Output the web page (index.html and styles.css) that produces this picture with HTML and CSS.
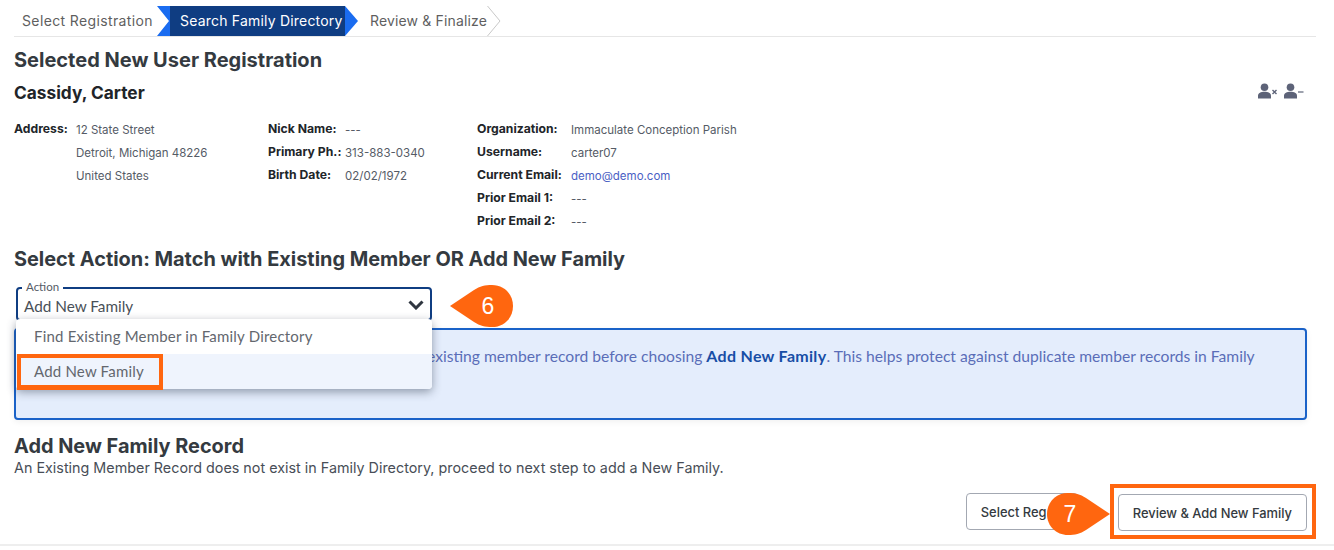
FILE: index.html
```html
<!DOCTYPE html>
<html lang="en">
<head>
<meta charset="utf-8">
<title>Search Family Directory</title>
<link rel="stylesheet" href="styles.css">
</head>
<body>
<main class="page">
  <nav class="stepper">
    <span class="step first">Select Registration</span>
    <svg class="notch" width="13" height="30" viewBox="0 0 13 30"><polygon points="0,0 13,0 13,30 0,30 12,15" fill="#1a6cf0"/></svg>
    <span class="step active">Search Family Directory</span>
    <svg class="tip" width="13" height="30" viewBox="0 0 13 30"><polygon points="0,0 13,15 0,30" fill="#1a6cf0"/></svg>
    <span class="step last">Review &amp; Finalize</span>
    <svg class="tip" width="14" height="30" viewBox="0 0 14 30"><polyline points="0.5,0 13,15 0.5,30" fill="none" stroke="#c8c8c8" stroke-width="1"/></svg>
  </nav>

  <h1 class="title">Selected New User Registration</h1>
  <div class="name-row">
    <h2 class="name">Cassidy, Carter</h2>
    <div class="user-icons">
      <svg width="20" height="16" viewBox="0 0 20 16"><circle cx="6.5" cy="4.2" r="3.8" fill="#5d6378"/><path d="M0 15.500 V12.500 C0 10 3 8.700 6.500 8.700 S13 10 13 12.500 V15.500Z" fill="#5d6378"/><path d="M14.500 7 L18.500 11 M18.500 7 L14.500 11" stroke="#5d6378" stroke-width="1.400"/></svg>
      <svg width="20" height="16" viewBox="0 0 20 16"><circle cx="6.500" cy="4.200" r="3.800" fill="#5d6378"/><path d="M0 15.500 V12.500 C0 10 3 8.700 6.500 8.700 S13 10 13 12.500 V15.500Z" fill="#5d6378"/><path d="M14 9 H19.500" stroke="#5d6378" stroke-width="1.200"/></svg>
    </div>
  </div>

  <section class="details">
    <dl class="col col-a">
      <dt>Address:</dt><dd>12 State Street</dd>
      <dt></dt><dd>Detroit, Michigan 48226</dd>
      <dt></dt><dd>United States</dd>
    </dl>
    <dl class="col col-b">
      <dt>Nick Name:</dt><dd>---</dd>
      <dt>Primary Ph.:</dt><dd>313-883-0340</dd>
      <dt>Birth Date:</dt><dd>02/02/1972</dd>
    </dl>
    <dl class="col col-c">
      <dt>Organization:</dt><dd>Immaculate Conception Parish</dd>
      <dt>Username:</dt><dd>carter07</dd>
      <dt>Current Email:</dt><dd class="link">demo@demo.com</dd>
      <dt>Prior Email 1:</dt><dd>---</dd>
      <dt>Prior Email 2:</dt><dd>---</dd>
    </dl>
  </section>

  <h2 class="section-title">Select Action: Match with Existing Member OR Add New Family</h2>

  <div class="select-wrap">
    <div class="select">
      <span class="select-label">Action</span>
      <span class="select-value">Add New Family</span>
      <svg class="caret" width="16" height="10" viewBox="0 0 16 10"><polyline points="1.500,1.500 8,8 14.500,1.500" fill="none" stroke="#2f3640" stroke-width="3"/></svg>
    </div>
    <ul class="menu">
      <li class="option">Find Existing Member in Family Directory</li>
      <li class="option selected"><span class="mark">Add New Family</span></li>
    </ul>
    <svg class="callout callout-6" width="64" height="42" viewBox="0 0 64 42"><path d="M0 21 L24 5 C30 1 35 0 42 0 C54 0 63 9 63 21 C63 33 54 42 42 42 C35 42 30 41 24 37Z" fill="#ff660f"/><text x="38" y="29" text-anchor="middle">6</text></svg>
  </div>

  <div class="notice">existing member record before choosing <b>Add New Family</b>. This helps protect against duplicate member records in Family</div>

  <h2 class="add-title">Add New Family Record</h2>
  <p class="add-text">An Existing Member Record does not exist in Family Directory, proceed to next step to add a New Family.</p>

  <div class="actions">
    <button class="btn btn-back">Select Reg</button>
    <span class="frame"><button class="btn">Review &amp; Add New Family</button></span>
    <svg class="callout callout-7" width="64" height="42" viewBox="0 0 64 42"><path d="M64 21 L40 5 C34 1 29 0 22 0 C10 0 1 9 1 21 C1 33 10 42 22 42 C29 42 34 41 40 37Z" fill="#ff660f"/><text x="24" y="29" text-anchor="middle">7</text></svg>
  </div>
</main>
</body>
</html>
```
FILE: styles.css
```css
* { box-sizing: border-box; }
html, body { margin: 0; padding: 0; background: #fff; }
body { width: 1334px; height: 550px; overflow: hidden; font-family: "Inter", "Liberation Sans", sans-serif; color: #343a40; }
.page { padding: 6px 16px 0 14px; height: 546px; border-bottom: 2px solid #eeeeee; position: relative; }

.stepper { display: flex; align-items: stretch; height: 31px; border-bottom: 1px solid #e6e6e6; margin-right: 2px; }
.stepper svg { flex: none; display: block; }
.step { display: flex; align-items: center; height: 30px; padding-bottom: 2px; font-size: 14px; letter-spacing: 0.1px; color: #5f5f5f; white-space: nowrap; }
.step.first { width: 143px; padding-left: 8px; letter-spacing: 0.37px; }
.step.active { width: 175px; padding-left: 10px; background: #0f3d82; color: #fff; letter-spacing: 0.2px; }
.step.last { width: 129px; padding-left: 12px; letter-spacing: 0.15px; }

.title { margin: 10px 0 0; font-size: 20px; line-height: 26px; font-weight: 700; color: #343a40; }
.name-row { display: flex; justify-content: space-between; align-items: center; height: 26px; margin-top: 7px; padding-right: 14px; }
.name { margin: 0; font-size: 17.300px; line-height: 24px; font-weight: 700; color: #212529; }
.user-icons { display: flex; gap: 6px; margin-top: -4px; }

.details { display: flex; margin-top: 12px; height: 115px; font-size: 11.500px; }
.col { display: grid; margin: 0; grid-auto-rows: 23px; align-items: center; align-content: start; }
.col dt { font-size: 12.200px; font-weight: 700; color: #212529; padding-bottom: 2px; }
.col dd { margin: 0; color: #555b66; white-space: nowrap; }
.col-a { width: 254px; grid-template-columns: 62px 1fr; }
.col-b { width: 209px; grid-template-columns: 77px 1fr; }
.col-c { grid-template-columns: 94px 1fr; }
.col .link { color: #4a60c4; }

.section-title { margin: 13px 0 0; font-size: 19.900px; line-height: 26px; font-weight: 700; color: #343a40; }

.select-wrap { position: relative; width: 416px; height: 34px; margin: 15px 0 0 2px; }
.select { height: 34px; border: 2px solid #0f3d82; border-radius: 4px; position: relative; font-family: "Lato", sans-serif; }
.select-label { position: absolute; left: 4px; top: -9px; padding: 0 4px; background: #fff; font-size: 11.500px; line-height: 14px; color: #555b66; }
.select-value { position: absolute; left: 6px; top: 8px; font-size: 15.300px; line-height: 18px; color: #495057; }
.caret { position: absolute; right: 6px; top: 11px; }
.menu { position: absolute; z-index: 3; left: 0; top: 32px; width: 416px; margin: 0; padding: 0; list-style: none; background: #fff; border-radius: 4px; box-shadow: 0 3px 10px rgba(40, 50, 70, 0.45); font-family: "Lato", sans-serif; font-size: 15px; letter-spacing: 0.2px; color: #63676e; }
.option { height: 35px; line-height: 35px; padding-left: 18px; }
.option.selected { background: #eff4fd; padding-left: 1px; border-radius: 0 0 4px 4px; }
.mark { display: block; width: 146px; height: 36px; line-height: 26px; padding-left: 13px; border: 5px solid #ff660f; border-width: 4px 4px 5px 4px; }
.callout { position: absolute; z-index: 4; display: block; }
.callout text { font-family: "Liberation Sans", sans-serif; font-size: 23px; fill: #fff; }
.callout-6 { left: 434px; top: -2px; }
.callout-7 { right: 206px; top: 10px; }

.notice { height: 92px; margin: 7px 11px 0 0; padding: 16px 40px 0 14px; text-indent: 397px; border: 2px solid #1a62c8; border-radius: 4px; background: #e4edfc; box-shadow: 0 2px 6px rgba(0, 0, 0, 0.06); font-family: "Lato", sans-serif; font-size: 15.650px; line-height: 20px; color: #5a6db8; }
.notice b { color: #174ea6; font-size: 16px; letter-spacing: 0.3px; }

.add-title { margin: 13px 0 0; font-size: 19.900px; line-height: 26px; font-weight: 700; color: #343a40; }
.add-text { margin: 0; font-size: 14.350px; line-height: 17px; color: #484e57; }

.actions { position: relative; display: flex; justify-content: flex-end; align-items: center; gap: 32px; margin: 7px 2px 0 0; height: 56px; }
.frame { display: block; padding: 6px 5px 4px 4px; border: 4px solid #ff660f; }
.btn { display: block; height: 37px; padding: 2px 14px 0; background: #fff; border: 1px solid #a3a8b2; border-radius: 4px; font-family: "Inter", "Liberation Sans", sans-serif; font-size: 12.900px; font-weight: 500; color: #343a40; white-space: nowrap; }
.btn-back { width: 112px; text-align: left; }
```
